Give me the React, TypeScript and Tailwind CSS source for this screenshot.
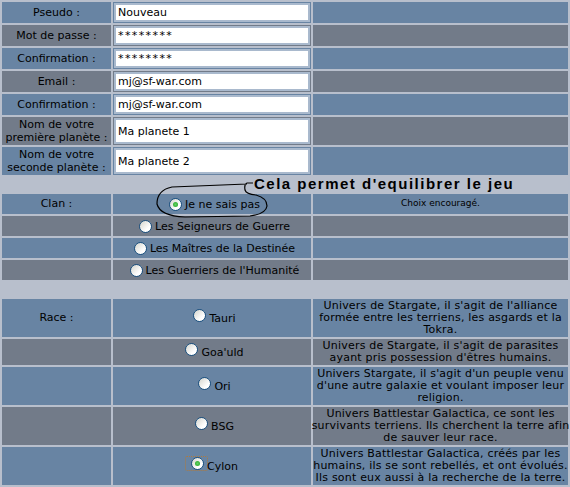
import React from 'react';

const BLUE = 'bg-[#6884a3]';
const GRAY = 'bg-[#727b89]';

function Radio({ checked = false }: { checked?: boolean }) {
    return (
        <span className="relative inline-flex items-center justify-center w-[13px] h-[13px] rounded-full border border-[#1c5180] bg-[linear-gradient(135deg,#d4d4cc,#ffffff_70%)] ml-[5px] mr-[3px] shrink-0">
            {checked && <span className="w-[5px] h-[5px] rounded-full bg-[radial-gradient(circle,#62d262,#21a121)]" />}
        </span>
    );
}

function Field({ label, value, bg, secret }: { label: React.ReactNode; value: string; bg: string; secret?: boolean }) {
    return (
        <>
            <div className={`${bg} flex items-center justify-center text-center leading-[13px]`}>{label}</div>
            <div className={`${bg} p-[1px] flex items-center`}>
                <input
                    readOnly
                    defaultValue={value}
                    className={
                        "w-full h-full bg-white border-2 border-[#a9b9cd] px-[2px] text-[11px] outline-none font-['DejaVu_Sans',sans-serif] text-black " +
                        (secret ? 'tracking-[1.4px]' : '')
                    }
                />
            </div>
            <div className={bg} />
        </>
    );
}

function ClanRow({ label, choice, checked, note, bg }: { label?: string; choice: string; checked?: boolean; note?: string; bg: string }) {
    return (
        <>
            <div className={`${bg} flex items-center justify-center`}>{label}</div>
            <div className={`${bg} flex items-center justify-center`}>
                <Radio checked={checked} />
                <span className="pt-[2px]">{choice}</span>
            </div>
            <div className={`${bg} flex items-center justify-center text-[9px]`}>{note}</div>
        </>
    );
}

function RaceRow({ label, choice, checked, lines, bg }: { label?: string; choice: string; checked?: boolean; lines: string[]; bg: string }) {
    return (
        <>
            <div className={`${bg} flex items-center justify-center`}>{label}</div>
            <div className={`${bg} flex items-center justify-center`}>
                <span className={checked ? 'outline outline-1 outline-dotted outline-[#b07a3c] rounded-[1px] inline-flex mb-[6px]' : 'inline-flex mb-[6px]'}>
                    <Radio checked={checked} />
                </span>
                <span className="pt-[2px]">{choice}</span>
            </div>
            <div className={`${bg} flex flex-col items-center justify-center text-center leading-[12px] whitespace-nowrap tracking-[0.2px]`}>
                {lines.map((l) => (
                    <span key={l}>{l}</span>
                ))}
            </div>
        </>
    );
}

export default function App() {
    return (
        <div className="relative w-[570px] h-[487px] overflow-hidden bg-[#b8bfcc] font-['DejaVu_Sans',sans-serif] text-[11px] text-black">
            <div className="grid grid-cols-[109px_198px_255px] grid-rows-[21px_21px_21px_21px_21px_28px_28px_15px_20px_20px_20px_20px_15px_38px_26px_38px_38px_38px] gap-[2px] p-[2px]">
                <Field label="Pseudo :" value="Nouveau" bg={BLUE} />
                <Field label="Mot de passe :" value="********" bg={GRAY} secret />
                <Field label="Confirmation :" value="********" bg={BLUE} secret />
                <Field label="Email :" value="mj@sf-war.com" bg={GRAY} />
                <Field label="Confirmation :" value="mj@sf-war.com" bg={BLUE} />
                <Field label={<span>Nom de votre<br />première planète :</span>} value="Ma planete 1" bg={GRAY} />
                <Field label={<span>Nom de votre<br />seconde planète :</span>} value="Ma planete 2" bg={BLUE} />

                <div className="col-span-3" />

                <ClanRow label="Clan :" choice="Je ne sais pas" checked note="Choix encouragé." bg={BLUE} />
                <ClanRow choice="Les Seigneurs de Guerre" bg={GRAY} />
                <ClanRow choice="Les Maîtres de la Destinée" bg={BLUE} />
                <ClanRow choice="Les Guerriers de l'Humanité" bg={GRAY} />

                <div className="col-span-3" />

                <RaceRow
                    label="Race :"
                    choice="Tauri"
                    bg={BLUE}
                    lines={["Univers de Stargate, il s'agit de l'alliance", 'formée entre les terriens, les asgards et la', 'Tokra.']}
                />
                <RaceRow
                    choice="Goa'uld"
                    bg={GRAY}
                    lines={["Univers de Stargate, il s'agit de parasites", "ayant pris possession d'êtres humains."]}
                />
                <RaceRow
                    choice="Ori"
                    bg={BLUE}
                    lines={["Univers Stargate, il s'agit d'un peuple venu", "d'une autre galaxie et voulant imposer leur", 'religion.']}
                />
                <RaceRow
                    choice="BSG"
                    bg={GRAY}
                    lines={['Univers Battlestar Galactica, ce sont les', 'survivants terriens. Ils cherchent la terre afin', 'de sauver leur race.']}
                />
                <RaceRow
                    choice="Cylon"
                    checked
                    bg={BLUE}
                    lines={['Univers Battlestar Galactica, créés par les', 'humains, ils se sont rebellés, et ont évolués.', 'Ils sont eux aussi à la recherche de la terre.']}
                />
            </div>

            {/* annotation scribbled over the clan choice */}
            <svg className="absolute left-0 top-0 pointer-events-none" width="570" height="487">
                <path
                    d="M 253 183 L 247 183 Q 244 184 245 190 Q 246 194 256 195 Q 267 198 267 206 Q 266 214 250 216 L 185 217 Q 160 216 157 204 Q 157 190 172 187 L 247 184"
                    fill="none"
                    stroke="#000"
                    strokeWidth="1.2"
                />
            </svg>
            <div className="absolute left-[254px] top-[175px] font-['Liberation_Sans',Arial,sans-serif] font-bold text-[15px] leading-[17px] tracking-[1.5px] whitespace-nowrap">
                Cela permet d'equilibrer le jeu
            </div>
        </div>
    );
}
